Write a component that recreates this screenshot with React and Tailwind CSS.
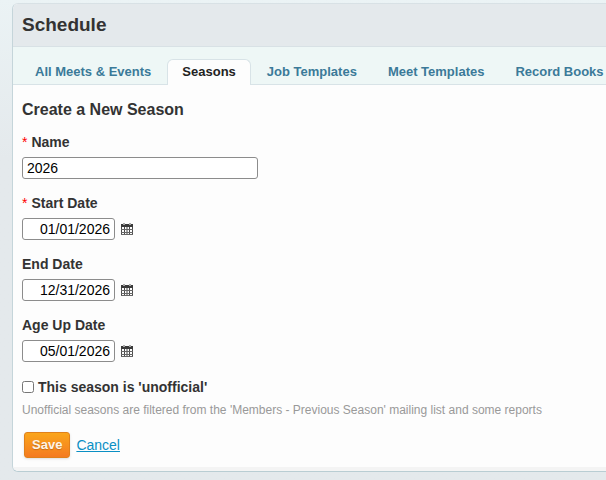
import { useState } from "react";

const TABS = [
    "All Meets & Events",
    "Seasons",
    "Job Templates",
    "Meet Templates",
    "Record Books",
];

function CalendarIcon() {
    return (<svg width="12" height="13" viewBox="0 0 12 13" aria-hidden="true">
      <path fill="#a8a8a8" d="M2 0h2v2H2zM8 0h2v2H8z"/>
      <path fill="#3a3a3a" d="M0 1h2v1h2V1h4v1h2V1h2v3H0z"/>
      <path fill="none" stroke="#4a4a4a" d="M.5 4v8M3.5 4v8M6 4v8M8.5 4v8M11.5 4v8"/>
      <path fill="none" stroke="#666" d="M0 6.5h12M0 9.5h12M0 11.5h12"/>
    </svg>);
}

function Label({ htmlFor, required, children }) {
    return (<label htmlFor={htmlFor} className="mb-[5px] block text-sm font-bold">
      {required && <span className="mr-1 font-normal text-[#ff0000]">*</span>}
      {children}
    </label>);
}

function DateField({ id, label, required, value, onChange }) {
    return (<div>
      <Label htmlFor={id} required={required}>{label}</Label>
      <div className="flex items-center gap-1.5">
        <input id={id} type="text" value={value} onChange={(e) => onChange(e.target.value)} className="h-[22px] w-[93px] rounded-[3px] border border-[#8c8c8c] bg-white px-1 text-right text-sm text-black"/>
        <button type="button" aria-label={`Pick ${label}`} className="flex">
          <CalendarIcon />
        </button>
      </div>
    </div>);
}

export default function App() {
    const [tab, setTab] = useState("Seasons");
    const [name, setName] = useState("2026");
    const [start, setStart] = useState("01/01/2026");
    const [end, setEnd] = useState("12/31/2026");
    const [ageUp, setAgeUp] = useState("05/01/2026");
    const [unofficial, setUnofficial] = useState(false);

    return (<div className="min-h-screen overflow-hidden bg-[#e4e9ec] bg-linear-to-b from-[#ebf3f5] to-[#e4e9ec] to-[160px] pt-[3px] pl-3 font-['Liberation_Sans',Arial,sans-serif] text-[#333]">
      <main className="overflow-hidden rounded-l-md border-y border-l border-t-[#d8e1e5] border-b-[#b9cdd3] border-l-[#c5d5da] bg-[#fdfdfd]">
        <header className="border-b border-[#d8e1e5] bg-[#e4e9ec] px-[9px] py-2">
          <h1 className="text-[19px] leading-[26px] font-bold">Schedule</h1>
        </header>

        {/* Tabs */}
        <nav className="flex gap-px border-b border-[#d8e3e7] bg-[#eef7f6] pt-3 pl-[7px] text-[13px] leading-6 font-bold whitespace-nowrap">
          {TABS.map((t) => (<a key={t} href="#" onClick={() => setTab(t)} aria-current={t === tab ? "page" : undefined} className={t === tab
                ? "-mb-px rounded-t-md border border-b-0 border-[#d8e3e7] bg-[#fdfdfd] px-3.5 pb-px text-[#222]"
                : "border border-b-0 border-transparent px-3.5 text-[#3b7a99] last:pr-0"}>
              {t}
            </a>))}
        </nav>

        {/* Season form */}
        <form className="px-[9px] pt-[13px] pb-2" onSubmit={(e) => e.preventDefault()}>
          <h2 className="mb-2.5 text-base font-bold">Create a New Season</h2>
          <div className="flex flex-col gap-3.5">
            <div>
              <Label htmlFor="name" required>Name</Label>
              <input id="name" type="text" value={name} onChange={(e) => setName(e.target.value)} className="block h-[22px] w-[236px] rounded-[3px] border border-[#8c8c8c] bg-white px-1 text-sm text-black"/>
            </div>
            <DateField id="start" label="Start Date" required value={start} onChange={setStart}/>
            <DateField id="end" label="End Date" value={end} onChange={setEnd}/>
            <DateField id="age-up" label="Age Up Date" value={ageUp} onChange={setAgeUp}/>
          </div>

          <div className="mt-[15px] flex items-center gap-1">
            <input id="unofficial" type="checkbox" checked={unofficial} onChange={(e) => setUnofficial(e.target.checked)} className="h-3 w-3"/>
            <label htmlFor="unofficial" className="text-sm font-bold">This season is 'unofficial'</label>
          </div>
          <p className="mt-[3px] text-xs leading-5 text-[#999]">
            Unofficial seasons are filtered from the 'Members - Previous Season' mailing list and some reports
          </p>

          <div className="mt-3 flex items-center gap-1.5 pl-0.5 text-sm">
            <button type="submit" className="h-[26px] rounded-[3px] border border-[#e0801a] bg-linear-to-b from-[#faa51a] to-[#f47a20] px-[7px] text-[13px] font-bold text-[#fef4e9] shadow-sm text-shadow-xs">
              Save
            </button>
            <a href="#" className="text-[#0a8fc4] underline">Cancel</a>
          </div>
        </form>
        <div className="mt-px h-1 bg-[#f4f4f4]"/>
      </main>
    </div>);
}
